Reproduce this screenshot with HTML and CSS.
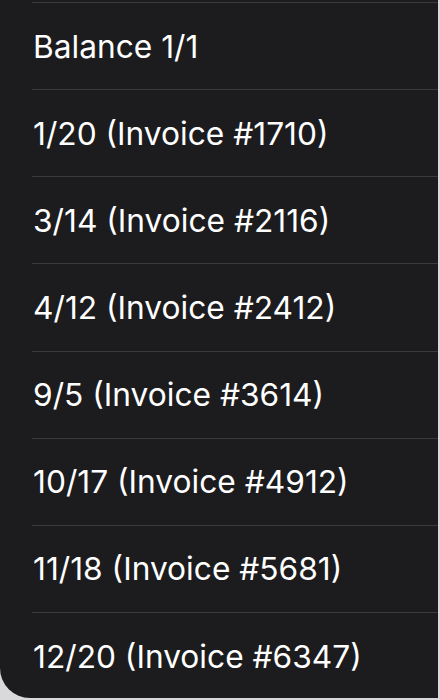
FILE: index.html
```html
<!DOCTYPE html>
<html lang="en">
<head>
    <meta charset="UTF-8">
    <meta name="viewport" content="width=device-width, initial-scale=1.0">
    <title>Invoices</title>
    <link rel="stylesheet" href="styles.css">
</head>
<body>
    <div class="sheet">
        <ul class="list">
            <li class="row">Balance 1/1</li>
            <li class="row">1/20 (Invoice #1710)</li>
            <li class="row">3/14 (Invoice #2116)</li>
            <li class="row">4/12 (Invoice #2412)</li>
            <li class="row">9/5 (Invoice #3614)</li>
            <li class="row">10/17 (Invoice #4912)</li>
            <li class="row">11/18 (Invoice #5681)</li>
            <li class="row">12/20 (Invoice #6347)</li>
        </ul>
    </div>
</body>
</html>
```

FILE: styles.css
```css
body {
    margin: 0;
    padding: 0;
    background-color: #D9D9DB;
    font-family: Inter, "Noto Sans", sans-serif;
}

.sheet {
    width: 438px;
    height: 698px;
    padding-top: 2px;
    box-sizing: border-box;
    background-color: #1C1C1E;
    border-bottom-left-radius: 30px;
    overflow: hidden;
}

.list {
    list-style: none;
    margin: 0;
    padding: 0 0 0 32px;
}

.row {
    height: 86.15px;
    display: flex;
    align-items: center;
    border-top: 1px solid #3A3A3C;
    color: #FFFFFF;
    font-size: 31.7px;
    padding-left: 1px;
}
```
